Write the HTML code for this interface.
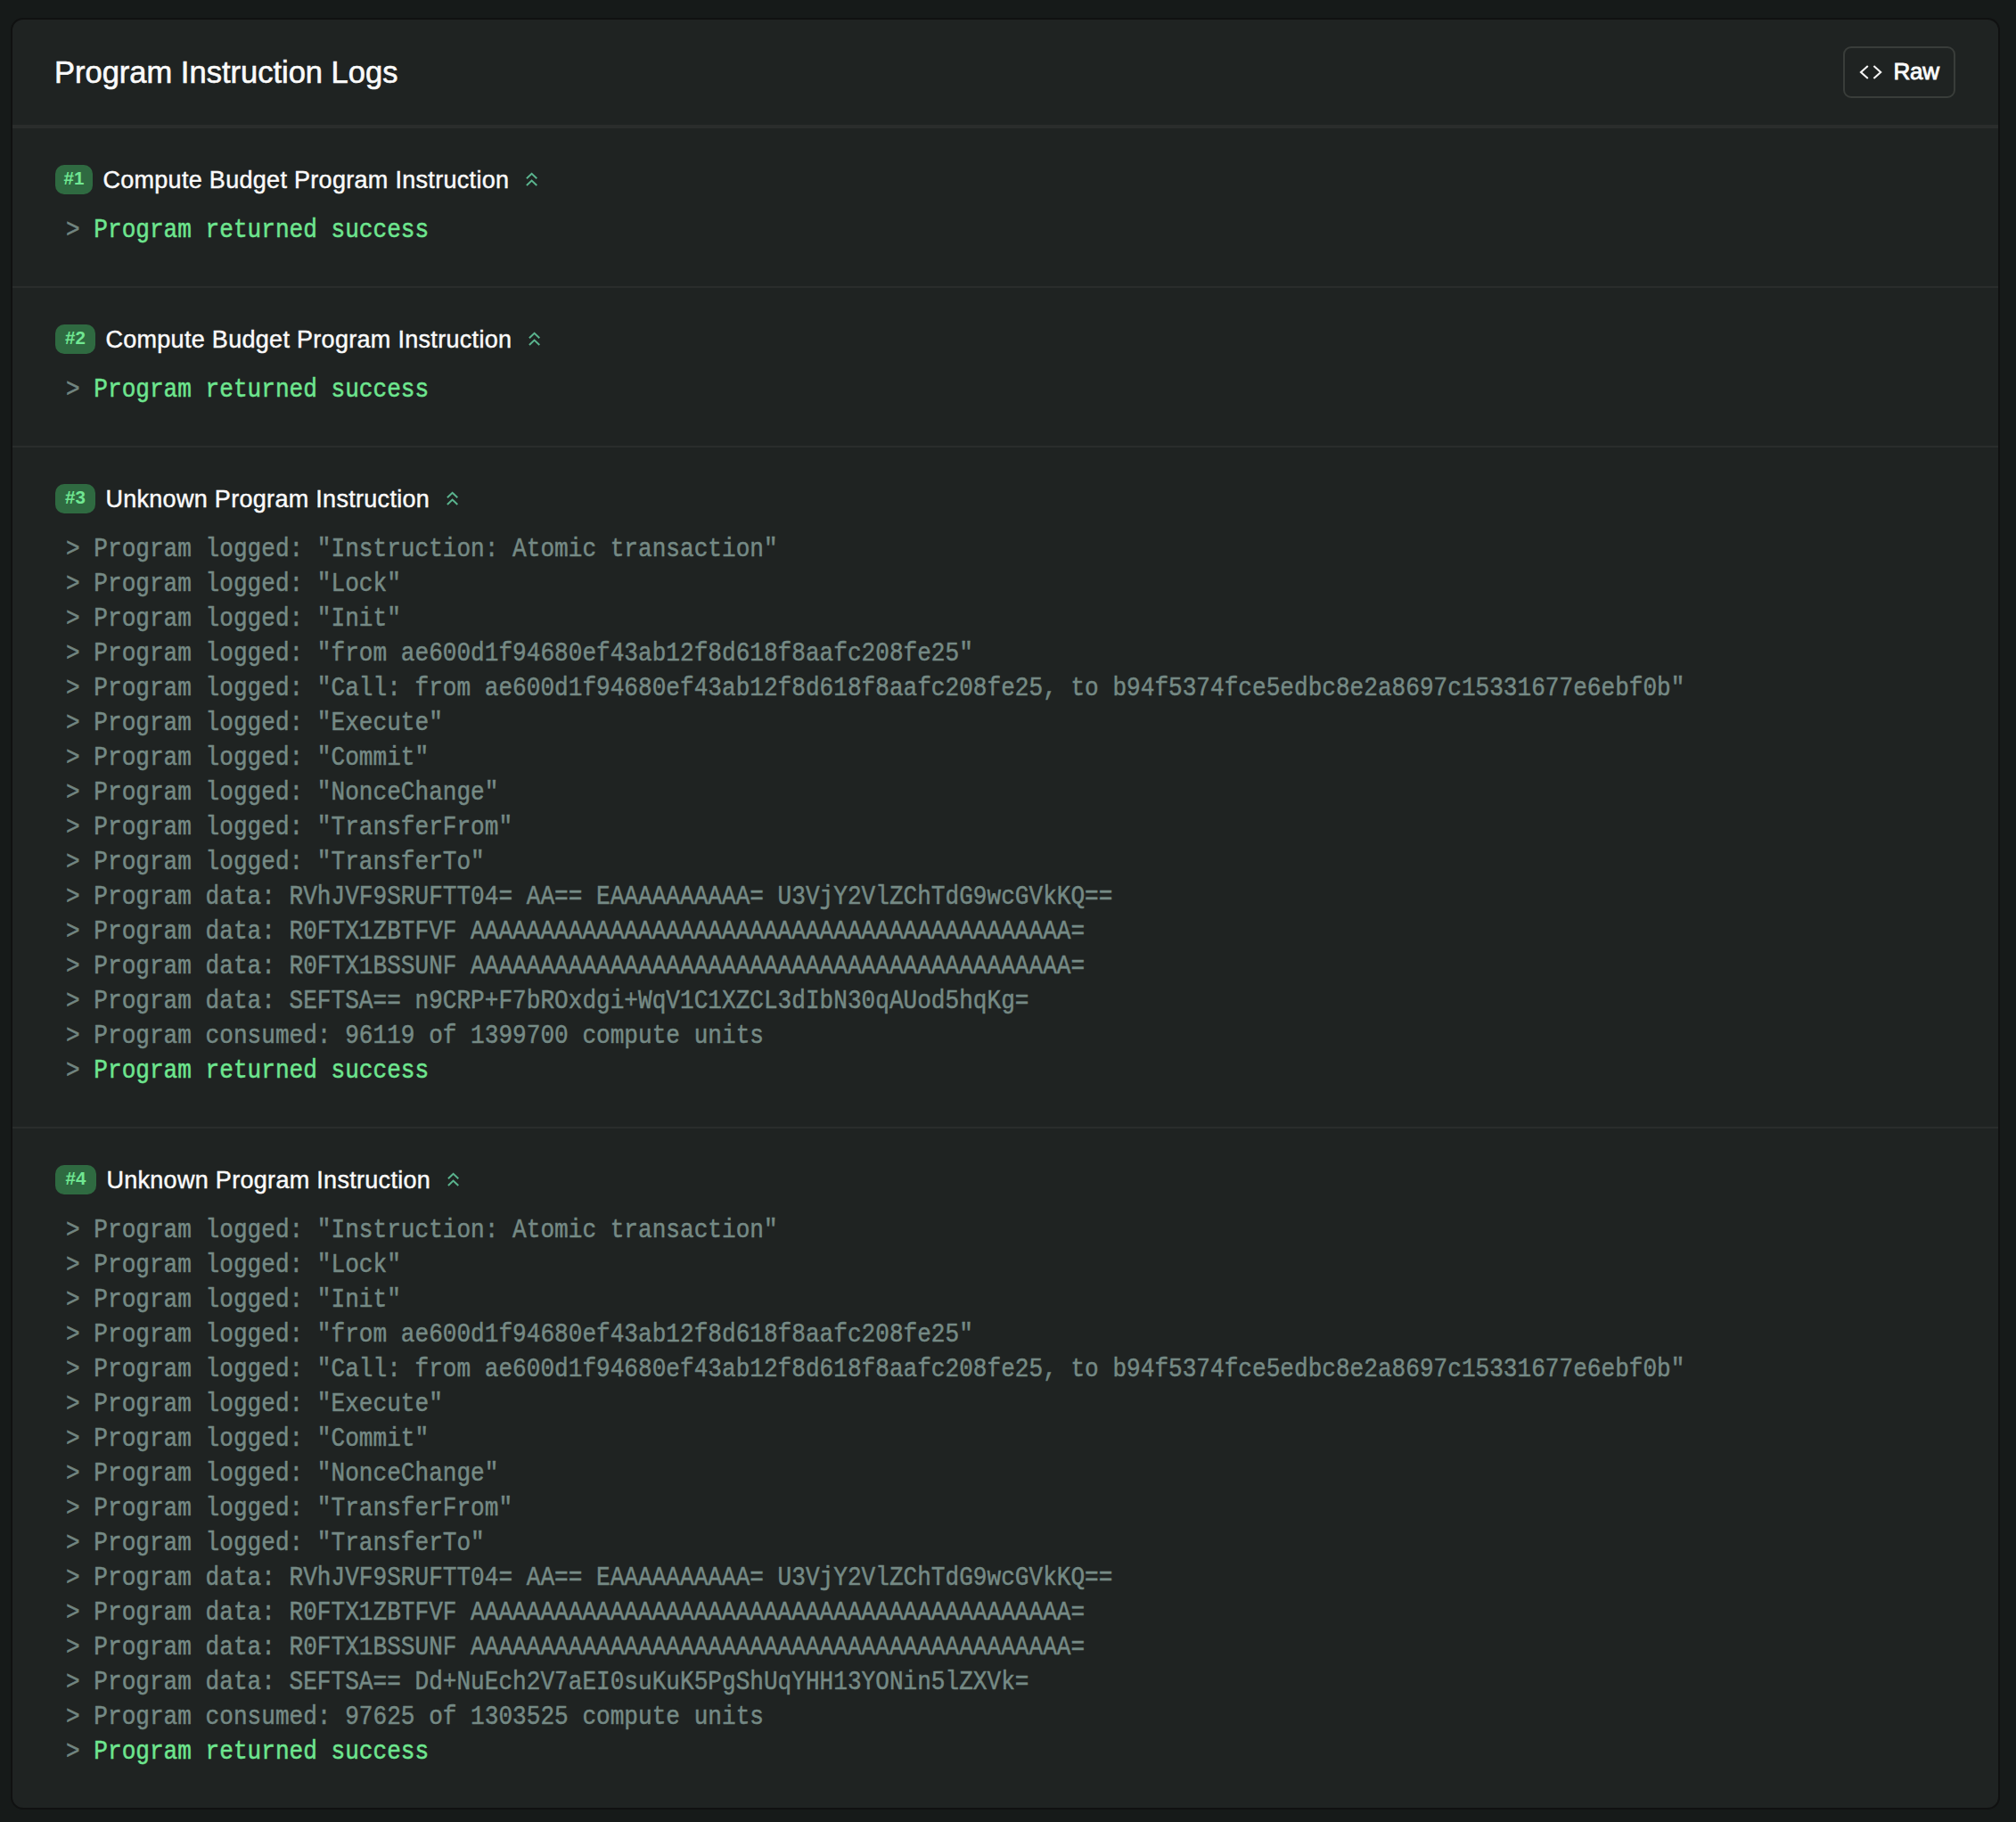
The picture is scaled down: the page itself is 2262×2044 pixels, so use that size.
<!DOCTYPE html><html><head><meta charset="utf-8"><title>Program Instruction Logs</title><style>html,body{margin:0;padding:0}
body{width:2262px;height:2044px;background:#161a19;position:relative;overflow:hidden;font-family:"Liberation Sans",sans-serif}
.card{position:absolute;left:12px;top:20px;width:2232px;height:2010px;box-sizing:border-box;border:2px solid #101111;border-radius:14px;background:#1f2322;overflow:hidden}
.hdr{position:relative;height:118px;border-bottom:4px solid #2a2d2c}
.title{position:absolute;left:47px;top:39px;font-size:34.5px;line-height:40px;color:#fafafa;-webkit-text-stroke:0.6px #fafafa;white-space:nowrap}
.raw{position:absolute;left:2054px;top:30px;width:126px;height:58px;box-sizing:border-box;border:2px solid #393d3a;border-radius:9px}
.raw svg{position:absolute;left:0;top:0}
.raw svg polyline{fill:none;stroke:#f5f5f5;stroke-width:2.1}
.raw span{position:absolute;left:54.5px;top:11px;font-size:26px;line-height:30px;letter-spacing:-0.2px;color:#fafafa;-webkit-text-stroke:0.9px #fafafa}
.sec{position:relative;height:177px;border-bottom:2px solid #2a2d2c}
.sec.big{height:762px}
.sec.last{border-bottom:none}
.head{position:absolute;left:48px;top:41px;height:33px;white-space:nowrap;display:flex;align-items:flex-start}
.badge{display:block;width:42px;height:33px;text-align:center;border-radius:10px;background:#2f6a41;color:#70e792;font-weight:bold;font-size:20.5px;line-height:30px}.badge.w{width:45px}.badge.w4{width:46px}
.st{display:block;margin-left:11.4px;margin-top:2px;font-size:27px;letter-spacing:0.3px;line-height:30px;color:#fafafa;-webkit-text-stroke:0.45px #fafafa}
.chev{display:block;margin-left:16.8px;margin-top:8px}
.chev polyline{fill:none;stroke:#5ab48e;stroke-width:2}
.logs{position:absolute;left:60px;top:96px;font-family:"Liberation Mono",monospace;font-size:26.1px;line-height:39px;white-space:pre;color:#758a85}
.ln{height:39px;transform:scaleY(1.1);transform-origin:0 26.45px;-webkit-text-stroke:0.45px currentColor}
.gt{color:#718580}
.s{color:#6ee68f}
</style></head><body><div class="card"><div class="hdr"><div class="title">Program Instruction Logs</div><div class="raw"><svg class="code" width="122" height="54" viewBox="0 0 122 54"><polyline points="25.8,20 18,27 25.8,34" /><polyline points="32.4,20 40.2,27 32.4,34" /></svg><span>Raw</span></div></div><div class="sec"><div class="head"><span class="badge">#1</span><span class="st">Compute Budget Program Instruction</span><svg class="chev" width="16" height="18" viewBox="0 0 16 18"><polyline points="2.9,7.2 8.6,1.8 14.3,7.2"/><polyline points="2.9,15 8.6,9.6 14.3,15"/></svg></div><div class="logs"><div class="ln"><span class="gt">&gt; </span><span class="s">Program returned success</span></div></div></div><div class="sec"><div class="head"><span class="badge w">#2</span><span class="st">Compute Budget Program Instruction</span><svg class="chev" width="16" height="18" viewBox="0 0 16 18"><polyline points="2.9,7.2 8.6,1.8 14.3,7.2"/><polyline points="2.9,15 8.6,9.6 14.3,15"/></svg></div><div class="logs"><div class="ln"><span class="gt">&gt; </span><span class="s">Program returned success</span></div></div></div><div class="sec big"><div class="head"><span class="badge w">#3</span><span class="st">Unknown Program Instruction</span><svg class="chev" width="16" height="18" viewBox="0 0 16 18"><polyline points="2.9,7.2 8.6,1.8 14.3,7.2"/><polyline points="2.9,15 8.6,9.6 14.3,15"/></svg></div><div class="logs"><div class="ln"><span class="gt">&gt; </span><span class="g">Program logged: "Instruction: Atomic transaction"</span></div><div class="ln"><span class="gt">&gt; </span><span class="g">Program logged: "Lock"</span></div><div class="ln"><span class="gt">&gt; </span><span class="g">Program logged: "Init"</span></div><div class="ln"><span class="gt">&gt; </span><span class="g">Program logged: "from ae600d1f94680ef43ab12f8d618f8aafc208fe25"</span></div><div class="ln"><span class="gt">&gt; </span><span class="g">Program logged: "Call: from ae600d1f94680ef43ab12f8d618f8aafc208fe25, to b94f5374fce5edbc8e2a8697c15331677e6ebf0b"</span></div><div class="ln"><span class="gt">&gt; </span><span class="g">Program logged: "Execute"</span></div><div class="ln"><span class="gt">&gt; </span><span class="g">Program logged: "Commit"</span></div><div class="ln"><span class="gt">&gt; </span><span class="g">Program logged: "NonceChange"</span></div><div class="ln"><span class="gt">&gt; </span><span class="g">Program logged: "TransferFrom"</span></div><div class="ln"><span class="gt">&gt; </span><span class="g">Program logged: "TransferTo"</span></div><div class="ln"><span class="gt">&gt; </span><span class="g">Program data: RVhJVF9SRUFTT04= AA== EAAAAAAAAAA= U3VjY2VlZChTdG9wcGVkKQ==</span></div><div class="ln"><span class="gt">&gt; </span><span class="g">Program data: R0FTX1ZBTFVF AAAAAAAAAAAAAAAAAAAAAAAAAAAAAAAAAAAAAAAAAAA=</span></div><div class="ln"><span class="gt">&gt; </span><span class="g">Program data: R0FTX1BSSUNF AAAAAAAAAAAAAAAAAAAAAAAAAAAAAAAAAAAAAAAAAAA=</span></div><div class="ln"><span class="gt">&gt; </span><span class="g">Program data: SEFTSA== n9CRP+F7bROxdgi+WqV1C1XZCL3dIbN30qAUod5hqKg=</span></div><div class="ln"><span class="gt">&gt; </span><span class="g">Program consumed: 96119 of 1399700 compute units</span></div><div class="ln"><span class="gt">&gt; </span><span class="s">Program returned success</span></div></div></div><div class="sec big last"><div class="head"><span class="badge w4">#4</span><span class="st">Unknown Program Instruction</span><svg class="chev" width="16" height="18" viewBox="0 0 16 18"><polyline points="2.9,7.2 8.6,1.8 14.3,7.2"/><polyline points="2.9,15 8.6,9.6 14.3,15"/></svg></div><div class="logs"><div class="ln"><span class="gt">&gt; </span><span class="g">Program logged: "Instruction: Atomic transaction"</span></div><div class="ln"><span class="gt">&gt; </span><span class="g">Program logged: "Lock"</span></div><div class="ln"><span class="gt">&gt; </span><span class="g">Program logged: "Init"</span></div><div class="ln"><span class="gt">&gt; </span><span class="g">Program logged: "from ae600d1f94680ef43ab12f8d618f8aafc208fe25"</span></div><div class="ln"><span class="gt">&gt; </span><span class="g">Program logged: "Call: from ae600d1f94680ef43ab12f8d618f8aafc208fe25, to b94f5374fce5edbc8e2a8697c15331677e6ebf0b"</span></div><div class="ln"><span class="gt">&gt; </span><span class="g">Program logged: "Execute"</span></div><div class="ln"><span class="gt">&gt; </span><span class="g">Program logged: "Commit"</span></div><div class="ln"><span class="gt">&gt; </span><span class="g">Program logged: "NonceChange"</span></div><div class="ln"><span class="gt">&gt; </span><span class="g">Program logged: "TransferFrom"</span></div><div class="ln"><span class="gt">&gt; </span><span class="g">Program logged: "TransferTo"</span></div><div class="ln"><span class="gt">&gt; </span><span class="g">Program data: RVhJVF9SRUFTT04= AA== EAAAAAAAAAA= U3VjY2VlZChTdG9wcGVkKQ==</span></div><div class="ln"><span class="gt">&gt; </span><span class="g">Program data: R0FTX1ZBTFVF AAAAAAAAAAAAAAAAAAAAAAAAAAAAAAAAAAAAAAAAAAA=</span></div><div class="ln"><span class="gt">&gt; </span><span class="g">Program data: R0FTX1BSSUNF AAAAAAAAAAAAAAAAAAAAAAAAAAAAAAAAAAAAAAAAAAA=</span></div><div class="ln"><span class="gt">&gt; </span><span class="g">Program data: SEFTSA== Dd+NuEch2V7aEI0suKuK5PgShUqYHH13YONin5lZXVk=</span></div><div class="ln"><span class="gt">&gt; </span><span class="g">Program consumed: 97625 of 1303525 compute units</span></div><div class="ln"><span class="gt">&gt; </span><span class="s">Program returned success</span></div></div></div></div></body></html>
